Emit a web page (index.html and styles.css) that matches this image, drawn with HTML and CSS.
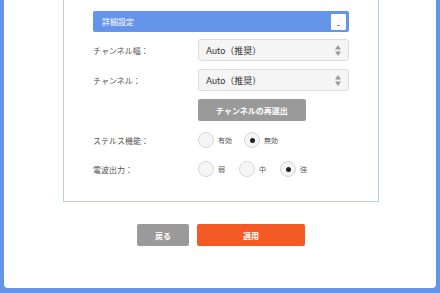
FILE: index.html
```html
<!DOCTYPE html>
<html lang="ja">
<head>
    <meta charset="UTF-8">
    <title>詳細設定</title>
    <link rel="stylesheet" href="styles.css">
</head>
<body>
    <div class="page">
        <div class="settings-box">
            <div class="section-header">
                <span class="section-title">詳細設定</span>
                <button class="collapse-button"><span class="dash"></span></button>
            </div>

            <div class="form-row">
                <div class="form-label">チャンネル幅：</div>
                <div class="select-box">
                    <span>Auto（推奨）</span>
                    <svg class="select-arrows" width="6" height="11" viewBox="0 0 6 11">
                        <path d="M3 0 L6 4.5 L0 4.5 Z" fill="#9a9a9a"/>
                        <path d="M0 6.5 L6 6.5 L3 11 Z" fill="#9a9a9a"/>
                    </svg>
                </div>
            </div>

            <div class="form-row">
                <div class="form-label">チャンネル：</div>
                <div class="select-box">
                    <span>Auto（推奨）</span>
                    <svg class="select-arrows" width="6" height="11" viewBox="0 0 6 11">
                        <path d="M3 0 L6 4.5 L0 4.5 Z" fill="#9a9a9a"/>
                        <path d="M0 6.5 L6 6.5 L3 11 Z" fill="#9a9a9a"/>
                    </svg>
                </div>
            </div>

            <div class="form-row">
                <div class="form-label"></div>
                <button class="gray-button reselect-button">チャンネルの再選出</button>
            </div>

            <div class="form-row radio-row stealth-row">
                <div class="form-label">ステルス機能：</div>
                <div class="radio-group">
                    <label class="radio-item"><span class="radio"></span>有効</label>
                    <label class="radio-item"><span class="radio checked"></span>無効</label>
                </div>
            </div>

            <div class="form-row radio-row power-row">
                <div class="form-label">電波出力：</div>
                <div class="radio-group">
                    <label class="radio-item"><span class="radio"></span>弱</label>
                    <label class="radio-item"><span class="radio"></span>中</label>
                    <label class="radio-item"><span class="radio checked"></span>強</label>
                </div>
            </div>
        </div>

        <div class="actions">
            <button class="gray-button back-button">戻る</button>
            <button class="apply-button">適用</button>
        </div>
    </div>
</body>
</html>
```

FILE: styles.css
```css
body, html {
    margin: 0;
    background-color: #6595e8;
    font-family: 'Lato', 'Noto Sans CJK JP', sans-serif;
    color: #555;
}
.page {
    background-color: #fff;
    margin: 0 4px 0 4px;
    height: 288px;
    border-radius: 0 0 4px 4px;
    overflow: hidden;
}
.settings-box {
    margin-left: 59px;
    width: 256px;
    border: 1px solid #b8cff5;
    border-top: none;
    padding: 11px 29px 24px 29px;
}
.section-header {
    height: 21px;
    background-color: #6595e8;
    border-radius: 2px;
    display: flex;
    align-items: center;
    justify-content: space-between;
    padding: 0 3px 0 9px;
}
.section-title {
    color: #fff;
    font-size: 8px;
}
.collapse-button {
    width: 15px;
    height: 16px;
    background: #fff;
    border: none;
    border-radius: 1px;
    padding: 0;
    display: flex;
    align-items: flex-end;
    justify-content: center;
}
.dash {
    width: 3px;
    height: 1px;
    background: #6595e8;
    margin-bottom: 4px;
}
.form-row {
    display: flex;
    align-items: center;
    margin-top: 7px;
}
.form-row + .form-row {
    margin-top: 8px;
}
.form-label {
    width: 105px;
    font-size: 8px;
    color: #555;
}
.select-box {
    width: 151px;
    height: 22px;
    box-sizing: border-box;
    border: 1px solid #ddd;
    border-radius: 3px;
    background-color: #f5f5f5;
    display: flex;
    align-items: center;
    justify-content: space-between;
    padding: 0 7px 0 7px;
    font-size: 9px;
    color: #333;
}
.gray-button {
    background-color: #9a9a9a;
    color: #fff;
    border: none;
    border-radius: 2px;
    height: 22px;
    font-family: inherit;
    font-size: 8px;
    font-weight: bold;
    padding: 0;
}
.reselect-button {
    width: 108px;
}
.form-row.stealth-row {
    margin-top: 11px;
}
.form-row.power-row {
    margin-top: 13px;
}
.radio-group {
    display: flex;
    align-items: center;
}
.radio-item {
    display: flex;
    align-items: center;
    font-size: 7px;
    color: #555;
    margin-right: 12px;
}
.power-row .radio-item {
    margin-right: 14px;
}
.radio {
    width: 16px;
    height: 16px;
    box-sizing: border-box;
    border: 1px solid #d6d6d6;
    border-radius: 50%;
    background-color: #f5f5f5;
    margin-right: 4px;
    display: flex;
    align-items: center;
    justify-content: center;
}
.radio.checked::after {
    content: "";
    width: 5px;
    height: 5px;
    border-radius: 50%;
    background-color: #222;
}
.actions {
    display: flex;
    justify-content: center;
    gap: 8px;
    margin-top: 22px;
    padding-left: 2px;
}
.back-button {
    width: 52px;
}
.apply-button {
    width: 108px;
    height: 22px;
    background-color: #f45a25;
    color: #fff;
    border: none;
    border-radius: 2px;
    font-family: inherit;
    font-size: 8px;
    font-weight: bold;
    padding: 0;
}
```
